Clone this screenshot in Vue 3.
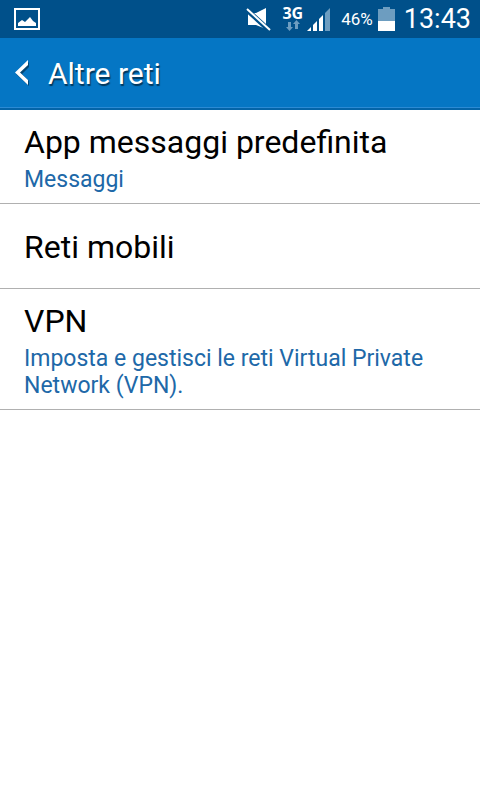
<script setup>
const items = [
  { title: 'App messaggi predefinita', detail: 'Messaggi' },
  { title: 'Reti mobili', detail: '' },
  { title: 'VPN', detail: 'Imposta e gestisci le reti Virtual Private Network (VPN).' },
]
</script>

<template>
  <div class="screen">
    <div class="status">
      <svg class="picture" width="26" height="22" viewBox="0 0 26 22">
        <rect x="1" y="1" width="24" height="20" fill="none" stroke="#fff" stroke-width="2" />
        <path d="M4 18V15L8 12L11 14L16 9L19 13L22 15V18Z" fill="#fff" />
      </svg>
      <svg class="mute" width="25" height="24" viewBox="0 0 25 24">
        <path d="M2 6H10L20 1V22L10 18H2Z" fill="#fff" />
        <path d="M0 2L24 24" stroke="#00508a" stroke-width="5" />
        <path d="M1 2L24 23" stroke="#fff" stroke-width="2" />
      </svg>
      <span class="network">
        <span class="generation">3G</span>
        <svg width="14" height="11" viewBox="0 0 14 11" fill="#6d9dc0">
          <path d="M2 2H5V7H7L3.500 11L0 7H2Z" />
          <path d="M9 9H12V4H14L10.500 0L7 4H9Z" />
        </svg>
      </span>
      <svg class="signal" width="24" height="24" viewBox="0 0 24 24">
        <path d="M0 24L4 20V24Z M6 18L10 14V24H6Z M12 12L16 8V24H12Z" fill="#fff" />
        <path d="M18 6L23 1V24H18Z" fill="#6d9dc0" />
      </svg>
      <span class="percent">46%</span>
      <svg class="battery" width="17" height="24" viewBox="0 0 17 24">
        <path d="M5 0H12V2H17V24H0V2H5Z" fill="#6d9dc0" />
        <path d="M0 14H17V24H0Z" fill="#fff" />
      </svg>
      <time class="clock">13:43</time>
    </div>
    <header class="bar">
      <button class="back" type="button" aria-label="Indietro">
        <svg width="15" height="26" viewBox="0 0 15 26">
          <path d="M15 2V7L8 14L15 21V26L2 14Z" fill="#024674" />
          <path d="M14 0V5L6 12.500L14 20V25L1 12.500Z" fill="#fff" />
        </svg>
      </button>
      <h1>Altre reti</h1>
    </header>
    <main>
      <button v-for="item in items" :key="item.title" class="row" type="button">
        <span class="title">{{ item.title }}</span>
        <span v-if="item.detail" class="detail">{{ item.detail }}</span>
      </button>
    </main>
  </div>
</template>

<style>
body { background: #fff; }
</style>

<style scoped>
.screen { font-family: Roboto, sans-serif; color: #000; }
.status { display: flex; align-items: center; height: 38px; padding: 0 9px 0 14px; background: #00508a; color: #fff; }
.mute { margin-left: auto; }
.network { display: flex; flex-direction: column; align-items: center; margin-left: 11px; padding-bottom: 1px; }
.generation { font: 700 16px/14px "Open Sans", sans-serif; }
.signal { margin-left: 4px; }
.percent { margin-left: 10px; font-size: 17px; }
.battery { margin-left: 5px; }
.clock { margin-left: 9px; font-size: 27px; }
.bar { display: flex; align-items: center; box-sizing: border-box; height: 72px; padding-left: 14px; background: #0576c4; border-bottom: 2px solid #0464a8; box-shadow: inset 0 -1px #2b8ad4; color: #fff; }
.back { display: flex; padding: 0; border: 0; background: none; }
h1 { margin: 0 0 0 19px; font-size: 30px; font-weight: 400; text-shadow: 1px 2px 1px #0008; }
.row { display: flex; flex-direction: column; justify-content: center; gap: 4px; box-sizing: border-box; width: 100%; min-height: 85px; padding: 12px 24px 10px; border: 0; border-bottom: 1px solid #b0b0b0; background: none; font-family: inherit; text-align: left; color: #000; }
.title { font-size: 32px; line-height: 40px; }
.detail { font-size: 23px; line-height: 27px; color: #2068a8; }
</style>
